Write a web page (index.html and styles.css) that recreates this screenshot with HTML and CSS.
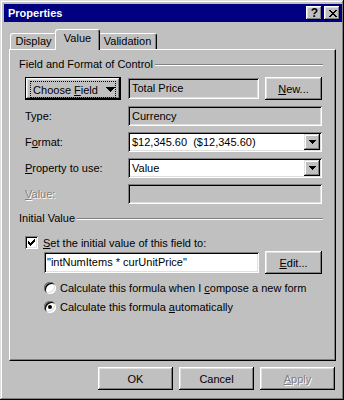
FILE: index.html
```html
<!DOCTYPE html>
<html lang="en">
<head>
  <meta charset="UTF-8" />
  <title>Properties</title>
  <link rel="stylesheet" href="styles.css">
</head>
<body>
  <div class="window">
    <div class="titlebar">
      <span class="title">Properties</span>
      <span class="tbtn help">?</span>
      <span class="tbtn close">
        <svg width="8" height="7" viewBox="0 0 8 7" shape-rendering="crispEdges"><path d="M0 0h2v1h-2zM6 0h2v1h-2zM1 1h2v1h-2zM5 1h2v1h-2zM2 2h4v1h-4zM3 3h2v1h-2zM2 4h4v1h-4zM1 5h2v1h-2zM5 5h2v1h-2zM0 6h2v1h-2zM6 6h2v1h-2z"/></svg>
      </span>
    </div>

    <div class="content">
      <div class="tabs">
        <div class="tab tab-display">Display</div>
        <div class="tab tab-value selected">Value</div>
        <div class="tab tab-validation">Validation</div>
      </div>

      <div class="panel">
        <div class="section">
          <span>Field and Format of Control</span>
          <div class="groove"></div>
        </div>

        <div class="fieldrow">
          <div class="btn default choose">
            <div class="focus">
              <span>Choose <u>F</u>ield</span>
              <svg width="9" height="5" viewBox="0 0 9 5" shape-rendering="crispEdges"><path d="M0 0h9v1h-9zM1 1h7v1h-7zM2 2h5v1h-5zM3 3h3v1h-3zM4 4h1v1h-1z"/></svg>
            </div>
          </div>
          <div class="edit readonly total">Total Price</div>
          <div class="btn small"><span><u>N</u>ew...</span></div>
        </div>

        <div class="props">
          <span class="lbl">Type:</span>
          <div class="edit readonly">Currency</div>

          <span class="lbl">F<u>o</u>rmat:</span>
          <div class="edit combo">
            <span class="val">$12,345.60  ($12,345.60)</span>
            <span class="dd"><svg width="7" height="4" viewBox="0 0 7 4" shape-rendering="crispEdges"><path d="M0 0h7v1h-7zM1 1h5v1h-5zM2 2h3v1h-3zM3 3h1v1h-1z"/></svg></span>
          </div>

          <span class="lbl"><u>P</u>roperty to use:</span>
          <div class="edit combo">
            <span class="val">Value</span>
            <span class="dd"><svg width="7" height="4" viewBox="0 0 7 4" shape-rendering="crispEdges"><path d="M0 0h7v1h-7zM1 1h5v1h-5zM2 2h3v1h-3zM3 3h1v1h-1z"/></svg></span>
          </div>

          <span class="lbl disabled"><u>V</u>alue:</span>
          <div class="edit readonly"></div>
        </div>

        <div class="section second">
          <span>Initial Value</span>
          <div class="groove"></div>
        </div>

        <div class="check">
          <span class="box">
            <svg width="7" height="7" viewBox="0 0 7 7" shape-rendering="crispEdges"><path d="M6 0h1v1h-1zM5 1h2v1h-2zM0 2h1v1h-1zM4 2h3v1h-3zM0 3h2v1h-2zM3 3h3v1h-3zM0 4h5v1h-5zM1 5h3v1h-3zM2 6h1v1h-1z"/></svg>
          </span>
          <span><u>S</u>et the initial value of this field to:</span>
        </div>

        <div class="formularow">
          <div class="edit formula">"intNumItems * curUnitPrice"</div>
          <div class="btn small"><span><u>E</u>dit...</span></div>
        </div>

        <div class="radio first">
          <span class="circle"></span>
          <span>Calculate this formula when I <u>c</u>ompose a new form</span>
        </div>
        <div class="radio">
          <span class="circle on"></span>
          <span>Calculate this formula <u>a</u>utomatically</span>
        </div>
      </div>

      <div class="footer">
        <div class="btn wide">OK</div>
        <div class="btn wide">Cancel</div>
        <div class="btn wide disabled"><span><u>A</u>pply</span></div>
      </div>
    </div>
  </div>
</body>
</html>
```

FILE: styles.css
```css
* {
  box-sizing: border-box;
}
body {
  margin: 0;
  background: #c0c0c0;
  font-family: "Liberation Sans", Arial, sans-serif;
  font-size: 11px;
  color: #000;
}
u {
  text-decoration-thickness: 1px;
  text-underline-offset: 1px;
}
.window {
  width: 344px;
  height: 400px;
  background: #c0c0c0;
  padding: 4px 2px 2px 4px;
  box-shadow: inset -1px -1px #000, inset 1px 1px #dfdfdf, inset -2px -2px #808080, inset 2px 2px #fff;
}

/* title bar */
.titlebar {
  height: 18px;
  background: #000080;
  color: #fff;
  display: flex;
  align-items: center;
  padding: 0 2px;
}
.title {
  flex: 1;
  font-weight: bold;
  padding-left: 2px;
}
.tbtn {
  width: 16px;
  height: 14px;
  background: #c0c0c0;
  color: #000;
  display: flex;
  align-items: center;
  justify-content: center;
  box-shadow: inset -1px -1px #000, inset 1px 1px #fff, inset -2px -2px #808080, inset 2px 2px #dfdfdf;
}
.tbtn.help {
  font-weight: bold;
  font-size: 12px;
  line-height: 14px;
  padding-left: 1px;
}
.tbtn.close {
  margin-left: 2px;
  padding-left: 1px;
}

.content {
  padding: 7px 6px 0 5px;
}

/* tabs */
.tabs {
  display: flex;
  align-items: flex-end;
  height: 20px;
  padding-left: 1px;
  position: relative;
  z-index: 1;
}
.tab {
  height: 16px;
  line-height: 15px;
  text-align: center;
  background: #c0c0c0;
  border-left: 1px solid #fff;
  border-top: 1px solid #fff;
  border-right: 1px solid #000;
  border-radius: 3px 3px 0 0;
  box-shadow: inset -1px 0 #808080;
}
.tab-display {
  width: 47px;
}
.tab-value {
  width: 41px;
}
.tab-validation {
  width: 59px;
}
.tab.selected {
  width: 45px;
  height: 21px;
  line-height: 17px;
  margin: 0 -2px -1px;
  position: relative;
  z-index: 2;
}

/* tab page */
.panel {
  height: 312px;
  background: #c0c0c0;
  border-left: 1px solid #fff;
  border-top: 1px solid #fff;
  border-right: 1px solid #000;
  border-bottom: 1px solid #000;
  box-shadow: inset -1px -1px #808080;
  padding: 7px 13px 0 9px;
}
.section {
  display: flex;
  align-items: center;
  height: 14px;
  line-height: 14px;
}
.section.second {
  margin-top: 7px;
}
.groove {
  flex: 1;
  height: 2px;
  margin: 2px -1px 0 2px;
  border-top: 1px solid #808080;
  border-bottom: 1px solid #fff;
}

.btn {
  background: #c0c0c0;
  height: 23px;
  display: flex;
  align-items: center;
  justify-content: center;
  box-shadow: inset -1px -1px #000, inset 1px 1px #fff, inset -2px -2px #808080, inset 2px 2px #dfdfdf;
}
.btn.default {
  box-shadow: inset 0 0 0 1px #000, inset -2px -2px #000, inset 2px 2px #fff, inset -3px -3px #808080, inset 3px 3px #dfdfdf;
}
.btn.small {
  width: 57px;
  margin-left: 6px;
}
.btn.wide {
  width: 75px;
}
.btn.disabled,
.lbl.disabled {
  color: #808080;
  text-shadow: 1px 1px #fff;
}

.edit {
  height: 21px;
  background: #fff;
  line-height: 21px;
  padding-left: 4px;
  white-space: pre;
  box-shadow: inset 1px 1px #808080, inset -1px -1px #fff, inset 2px 2px #000, inset -2px -2px #dfdfdf;
}
.edit.readonly {
  background: #c0c0c0;
}

.fieldrow {
  display: flex;
  align-items: center;
  height: 23px;
  margin-top: 6px;
  padding-left: 6px;
}
.choose {
  width: 96px;
  align-items: stretch;
}
.focus {
  flex: 1;
  margin: 4px 5px 2px 5px;
  border: 1px dotted #000;
  display: flex;
  align-items: center;
  justify-content: center;
  gap: 8px;
  padding-left: 2px;
}
.total {
  width: 131px;
  margin-left: 7px;
}

.props {
  display: grid;
  grid-template-columns: 103px 1fr;
  grid-auto-rows: 20px;
  row-gap: 6px;
  margin-top: 6px;
  padding-left: 6px;
}
.lbl {
  align-self: center;
}
.props .edit {
  height: 20px;
  line-height: 20px;
}
.combo {
  display: flex;
  align-items: center;
  padding-right: 2px;
}
.combo .val {
  flex: 1;
}
.dd {
  width: 16px;
  height: 16px;
  display: flex;
  align-items: center;
  justify-content: center;
  background: #c0c0c0;
  box-shadow: inset -1px -1px #000, inset 1px 1px #dfdfdf, inset -2px -2px #808080, inset 2px 2px #fff;
}

.check {
  display: flex;
  align-items: center;
  gap: 5px;
  height: 13px;
  margin-top: 11px;
  padding-left: 6px;
}
.box {
  width: 13px;
  height: 13px;
  background: #fff;
  display: flex;
  align-items: center;
  justify-content: center;
  box-shadow: inset 1px 1px #808080, inset -1px -1px #fff, inset 2px 2px #000, inset -2px -2px #dfdfdf;
}

.formularow {
  display: flex;
  align-items: center;
  height: 23px;
  margin-top: 2px;
  padding-left: 25px;
}
.formula {
  width: 215px;
  padding-left: 3px;
}

.radio {
  display: flex;
  align-items: center;
  gap: 4px;
  height: 13px;
  margin-top: 6px;
  padding-left: 25px;
}
.radio.first {
  margin-top: 7px;
}
.circle {
  width: 12px;
  height: 12px;
  border-radius: 50%;
  background: #fff;
  display: flex;
  align-items: center;
  justify-content: center;
  box-shadow: inset 1px 1px #808080, inset -1px -1px #fff, inset 2px 2px #000, inset -2px -2px #dfdfdf;
}
.circle.on::after {
  content: "";
  width: 4px;
  height: 4px;
  border-radius: 50%;
  background: #000;
}

.footer {
  display: flex;
  justify-content: flex-end;
  gap: 6px;
  margin-top: 6px;
  padding-right: 1px;
}
```
